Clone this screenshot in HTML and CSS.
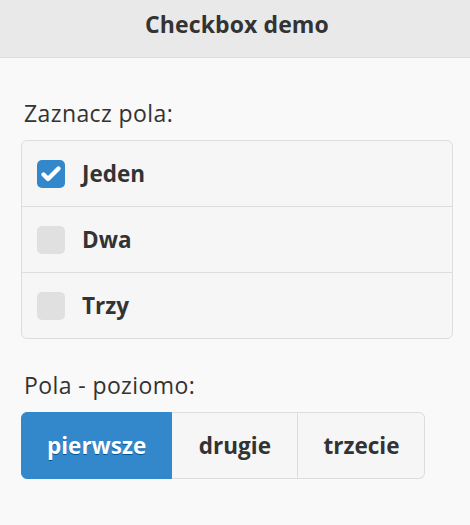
FILE: index.html
```html
<!DOCTYPE html>
<html lang="pl">
<head>
<meta charset="utf-8">
<title>Checkbox demo</title>
<link rel="stylesheet" href="styles.css">
</head>
<body>
<header class="header"><h1 class="title">Checkbox demo</h1></header>
<main class="content">
  <fieldset class="group">
    <legend class="legend">Zaznacz pola:</legend>
    <div class="list">
      <label class="row">
        <span class="box checked"><svg viewBox="0 0 28 28" width="28" height="28"><path d="M6.5 14.5l4.5 4.5L21.5 8.5" fill="none" stroke="#fff" stroke-width="4.4" stroke-linecap="round" stroke-linejoin="round"/></svg></span>
        <span class="label">Jeden</span>
      </label>
      <label class="row">
        <span class="box"></span>
        <span class="label">Dwa</span>
      </label>
      <label class="row">
        <span class="box"></span>
        <span class="label">Trzy</span>
      </label>
    </div>
  </fieldset>
  <fieldset class="group">
    <legend class="legend">Pola - poziomo:</legend>
    <div class="hbar">
      <span class="hbtn active">pierwsze</span>
      <span class="hbtn wide">drugie</span>
      <span class="hbtn">trzecie</span>
    </div>
  </fieldset>
</main>
</body>
</html>
```

FILE: styles.css
```css
* { box-sizing: border-box; }
html, body { margin: 0; padding: 0; }
body {
  background: #f9f9f9;
  font-family: "Open Sans", "DejaVu Sans", sans-serif;
  color: #333;
}
.header {
  background: #e9e9e9;
  border-bottom: 1px solid #dddddd;
  height: 58px;
  display: flex;
  align-items: center;
  justify-content: center;
}
.title {
  margin: 0;
  font-size: 23px;
  letter-spacing: 0.1px;
  font-weight: 700;
  color: #333;
  position: relative;
  top: -5px;
  left: 2px;
}
.content {
  padding: 41px 17px 0 21px;
}
.group {
  border: 0;
  margin: 0 0 32px 0;
  padding: 0;
  min-width: 0;
}
.legend {
  padding: 0 0 0 3px;
  font-size: 23px;
  letter-spacing: 0.4px;
  line-height: 28px;
  margin-bottom: 13px;
  float: left;
  width: 100%;
}
.list {
  clear: both;
  border: 1px solid #dddddd;
  border-radius: 6px;
  background: #f6f6f6;
  overflow: hidden;
}
.row {
  display: flex;
  align-items: center;
  height: 66px;
  padding-left: 15px;
  border-top: 1px solid #dddddd;
}
.row:first-child { border-top: 0; height: 65px; }
.box {
  width: 28px;
  height: 28px;
  border-radius: 5px;
  background: #e0e0e0;
  display: flex;
}
.box.checked { background: #3388cc; }
.label {
  margin-left: 17px;
  font-size: 22.5px;
  font-weight: 700;
}
.hbar {
  clear: both;
  display: flex;
}
.hbtn {
  height: 67px;
  display: flex;
  align-items: center;
  justify-content: center;
  font-size: 22.5px;
  font-weight: 700;
  background: #f6f6f6;
  border: 1px solid #dddddd;
  border-left: 0;
  padding: 0 25px;
}
.hbtn.wide { padding: 0 26.5px; }
.hbtn:first-child { border-radius: 6px 0 0 6px; border-left: 1px solid #dddddd; }
.hbtn:last-child { border-radius: 0 6px 6px 0; }
.hbtn.active {
  background: #3388cc;
  border-color: #3388cc;
  color: #fff;
  text-shadow: 0 1px 0 #005599;
}
```
